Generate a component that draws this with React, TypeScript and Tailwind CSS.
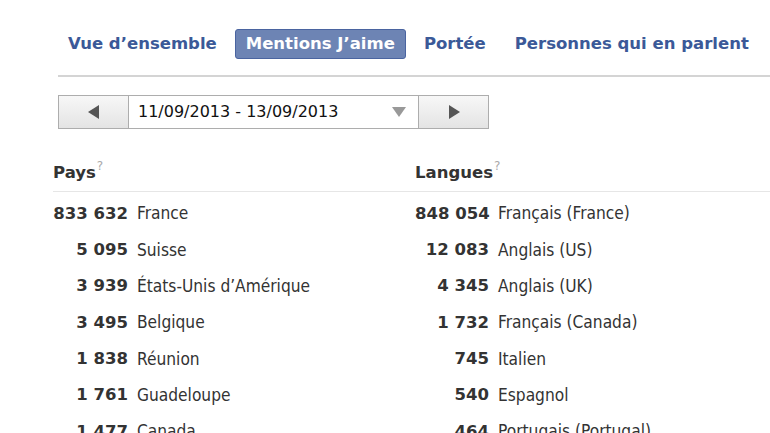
import React from "react";

const font = { fontFamily: '"DejaVu Sans Condensed", "DejaVu Sans", sans-serif' };

const pays: [string, string][] = [
  ["833 632", "France"],
  ["5 095", "Suisse"],
  ["3 939", "États-Unis d’Amérique"],
  ["3 495", "Belgique"],
  ["1 838", "Réunion"],
  ["1 761", "Guadeloupe"],
  ["1 477", "Canada"],
];

const langues: [string, string][] = [
  ["848 054", "Français (France)"],
  ["12 083", "Anglais (US)"],
  ["4 345", "Anglais (UK)"],
  ["1 732", "Français (Canada)"],
  ["745", "Italien"],
  ["540", "Espagnol"],
  ["464", "Portugais (Portugal)"],
];

function Column({ title, rows, numW }: { title: string; rows: [string, string][]; numW: string }) {
  return (
    <div className="flex flex-col">
      <div className="h-[41px] flex items-end pb-[10px] border-b border-[#e6e6e6]">
        <span className="font-bold text-[16.5px] text-[#333] leading-none font-['DejaVu_Sans',sans-serif]">
          {title}
          <span className="relative top-[-8px] ml-[1px] text-[12px] font-normal text-[#aaa]">?</span>
        </span>
      </div>
      <div className="flex flex-col pt-[4px]">
        {rows.map(([n, name]) => (
          <div key={name} className="h-[36.33px] flex items-center text-[17.2px] text-[#333] whitespace-nowrap">
            <span className={`${numW} text-right font-bold text-[16.5px] font-['DejaVu_Sans',sans-serif]`}>{n}</span>
            <span className="ml-[9px]">{name}</span>
          </div>
        ))}
      </div>
    </div>
  );
}

export default function App() {
  return (
    <div className="w-[770px] h-[433px] overflow-hidden bg-white" style={font}>
      <div className="pl-[57px] pt-[29px]">
        <div className="flex items-center gap-[7px] h-[30px] text-[16.5px] font-bold text-[#3b5998] font-['DejaVu_Sans',sans-serif]">
          <div className="px-[11px] h-[30px] flex items-center">Vue d’ensemble</div>
          <div className="px-[10px] h-[30px] flex items-center rounded-[3px] bg-[#6d84b4] border border-[#4a64a0] text-white">
            Mentions J’aime
          </div>
          <div className="px-[11px] h-[30px] flex items-center">Portée</div>
          <div className="px-[11px] h-[30px] flex items-center">Personnes qui en parlent</div>
        </div>
      </div>
      <div className="ml-[58px] mt-[16px] h-[2px] bg-[#d4d4d4]" />
      <div className="ml-[58px] mt-[18px] flex h-[34px]">
        <div className="w-[71px] h-full flex items-center justify-center border border-[#adadad] bg-gradient-to-b from-[#f7f7f7] to-[#e4e4e4]">
          <svg width="12" height="14" viewBox="0 0 12 14"><path d="M11 0 L11 14 L0 7 Z" fill="#555" /></svg>
        </div>
        <div className="w-[289px] h-full flex items-center border-y border-[#adadad] bg-white pl-[9px] pr-[12px] text-[16px] text-[#111] font-['DejaVu_Sans',sans-serif]">
          <span className="flex-1">11/09/2013 - 13/09/2013</span>
          <svg width="14" height="10" viewBox="0 0 14 10"><path d="M0 0 L14 0 L7 10 Z" fill="#999" /></svg>
        </div>
        <div className="w-[71px] h-full flex items-center justify-center border border-[#adadad] bg-gradient-to-b from-[#f7f7f7] to-[#e4e4e4]">
          <svg width="12" height="14" viewBox="0 0 12 14"><path d="M1 0 L1 14 L12 7 Z" fill="#555" /></svg>
        </div>
      </div>
      <div className="ml-[53px] mt-[22px] grid grid-cols-[362px_1fr]">
        <Column title="Pays" rows={pays} numW="w-[75px]" />
        <Column title="Langues" rows={langues} numW="w-[74px]" />
      </div>
    </div>
  );
}
